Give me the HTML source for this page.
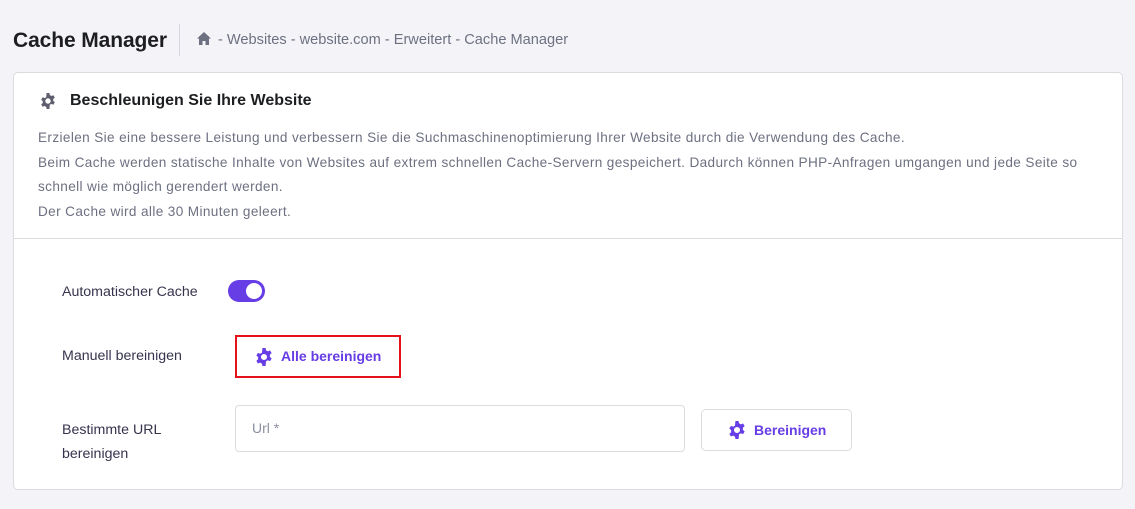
<!DOCTYPE html>
<html><head><meta charset="utf-8"><style>
*{box-sizing:border-box;margin:0;padding:0}
body{width:1135px;height:509px;background:#f4f4f8;font-family:"Liberation Sans",sans-serif;color:#2f1c6a;position:relative;overflow:hidden}
.abs{position:absolute}
h1{position:absolute;left:13px;top:29px;font-size:21px;font-weight:bold;color:#1d1e20;letter-spacing:-0.1px}
.sep{left:179px;top:24px;width:1px;height:32px;background:#d8d8e0}
.bc{top:32px;font-size:14.6px;color:#6d7081}
.card{left:13px;top:72px;width:1110px;height:418px;background:#fff;border:1px solid #dadce0;border-radius:5px}
.title{left:70px;top:92px;font-size:16px;font-weight:bold;color:#1d1e20}
.desc{left:38px;top:126px;font-size:13.6px;line-height:24.5px;color:#6d7081;width:1080px;letter-spacing:0.37px;white-space:nowrap}
.div{left:14px;top:238px;width:1108px;height:1px;background:#dadce0}
.lbl{font-size:14.2px;color:#36344d;line-height:24px}
.tog{left:228px;top:280px;width:37px;height:22px;border-radius:11px;background:#673de6}
.tog::after{content:"";position:absolute;right:3px;top:3px;width:16px;height:16px;border-radius:50%;background:#fff}
.red{left:235px;top:335px;width:166px;height:43px;border:2px solid #e5121c}
.pur{color:#673de6;font-weight:bold;font-size:14px}
.inp{left:235px;top:405px;width:450px;height:47px;border:1px solid #dadce0;border-radius:4px;font-size:14px;color:#8c8fa0;padding:14px 16px}
.btn{left:701px;top:409px;width:151px;height:42px;border:1px solid #dadce0;border-radius:5px}
</style></head><body>
<svg width="0" height="0" style="position:absolute"><defs><g id="g"><path d="M6.6 0h2.8l.4 2.1a6 6 0 0 1 1.6.9l2-.8 1.4 2.4-1.6 1.4a6 6 0 0 1 0 1.9l1.6 1.4-1.4 2.4-2-.8a6 6 0 0 1-1.6.9L9.4 16H6.6l-.4-2.1a6 6 0 0 1-1.6-.9l-2 .8L1.2 11.4l1.6-1.4a6 6 0 0 1 0-1.9L1.2 6.7 2.6 4.3l2 .8a6 6 0 0 1 1.6-.9z M8 5.3a2.7 2.7 0 1 0 0 5.4a2.7 2.7 0 1 0 0-5.4z" fill-rule="evenodd"/></g></defs></svg>
<h1>Cache Manager</h1>
<div class="abs sep"></div>
<svg class="abs" style="left:196px;top:31px" width="16" height="15" viewBox="0 0 16 15"><path d="M8 1L1 7.5h2V14h3.5V10h3v4H13V7.5h2z" fill="#6d7081"/></svg>
<div class="abs bc" style="left:218px">- Websites - website.com - Erweitert - Cache Manager</div>
<div class="abs card"></div>
<svg class="abs" style="left:40px;top:93px" width="16" height="16" viewBox="0 0 16 16" fill="#5e5e6e"><use href="#g"/></svg>
<div class="abs title">Beschleunigen Sie Ihre Website</div>
<div class="abs desc">Erzielen Sie eine bessere Leistung und verbessern Sie die Suchmaschinenoptimierung Ihrer Website durch die Verwendung des Cache.<br>Beim Cache werden statische Inhalte von Websites auf extrem schnellen Cache-Servern gespeichert. Dadurch können PHP-Anfragen umgangen und jede Seite so<br>schnell wie möglich gerendert werden.<br>Der Cache wird alle 30 Minuten geleert.</div>
<div class="abs div"></div>
<div class="abs lbl" style="left:62px;top:280px">Automatischer Cache</div>
<div class="abs tog"></div>
<div class="abs lbl" style="left:62px;top:344px">Manuell bereinigen</div>
<div class="abs red"></div>
<svg class="abs" style="left:255px;top:348px" width="18" height="18" viewBox="0 0 16 16" fill="#673de6"><use href="#g"/></svg>
<div class="abs pur" style="left:281px;top:348px">Alle bereinigen</div>
<div class="abs lbl" style="left:62px;top:418px">Bestimmte URL<br>bereinigen</div>
<div class="abs inp">Url *</div>
<div class="abs btn"></div>
<svg class="abs" style="left:728px;top:421px" width="18" height="18" viewBox="0 0 16 16" fill="#673de6"><use href="#g"/></svg>
<div class="abs pur" style="left:754px;top:422px">Bereinigen</div>
</body></html>
